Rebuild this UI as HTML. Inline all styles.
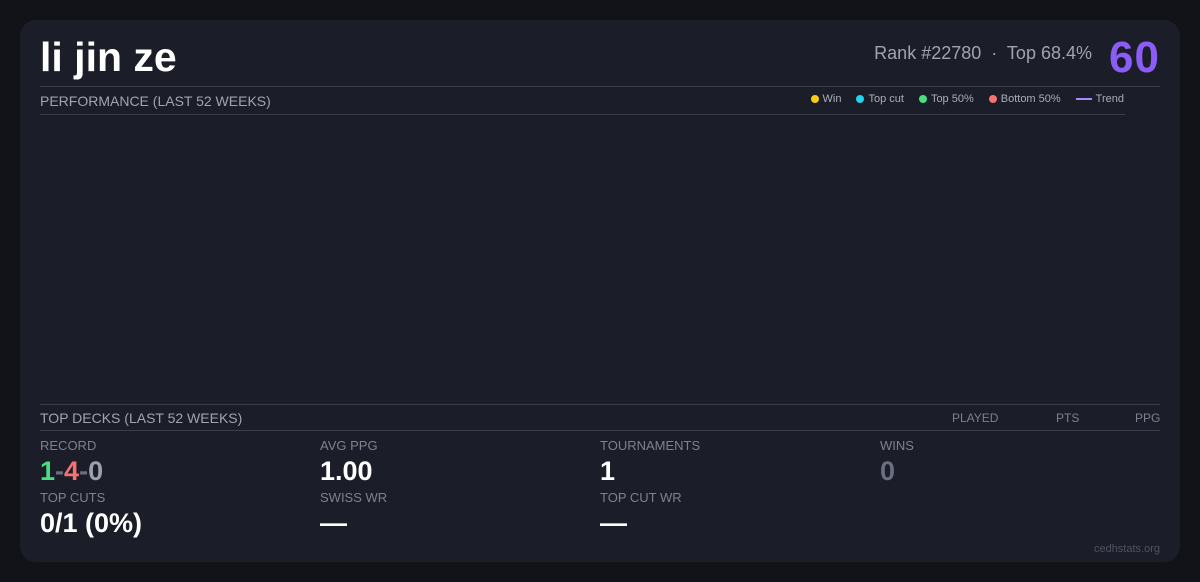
<!DOCTYPE html>
<html><head><style>
*{margin:0;padding:0;box-sizing:border-box}
body{width:1200px;height:582px;background:#121318;font-family:"Liberation Sans",sans-serif;position:relative;overflow:hidden}
.card{position:absolute;left:20px;top:20px;width:1160px;height:542px;background:#1b1d29;border-radius:16px}
.a{position:absolute;white-space:nowrap}
.line{position:absolute;height:1px;background:#3a3e4c}
.lab{font-size:13px;color:#7d8190}
.val{font-size:27px;font-weight:bold;color:#fff}
.leg{font-size:11px;color:#a9adba;display:flex;align-items:center}
.dot{width:8px;height:8px;border-radius:50%;display:inline-block;margin-right:4px;margin-left:15px}
</style></head><body>
<div class="card"></div>
<div class="a" style="left:40px;top:34px;font-size:41px;font-weight:bold;color:#fff">li jin ze</div>
<div class="a" style="right:108px;top:43px;font-size:18px;color:#a0a3b0">Rank #22780 &nbsp;·&nbsp; Top 68.4%</div>
<div class="a" style="right:40px;top:33px;font-size:44px;font-weight:bold;color:#8b5cf6;letter-spacing:1px">60</div>
<div class="line" style="left:40px;top:86px;width:1120px"></div>
<div class="a" style="left:40px;top:93px;font-size:14px;color:#a0a3b0">PERFORMANCE (LAST 52 WEEKS)</div>
<div class="a leg" style="right:76px;top:93px">
<span class="dot" style="background:#facc15"></span>Win
<span class="dot" style="background:#22d3ee"></span>Top cut
<span class="dot" style="background:#4ade80"></span>Top 50%
<span class="dot" style="background:#f87171"></span>Bottom 50%
<span style="display:inline-block;width:16px;height:2px;background:#a78bfa;margin-left:15px;margin-right:4px"></span>Trend
</div>
<div class="line" style="left:40px;top:114px;width:1085px"></div>
<div class="line" style="left:40px;top:404px;width:1120px"></div>
<div class="a" style="left:40px;top:410px;font-size:14px;color:#a0a3b0">TOP DECKS (LAST 52 WEEKS)</div>
<div class="a" style="left:952px;top:411px;font-size:12px;color:#7d8190">PLAYED</div>
<div class="a" style="left:1056px;top:411px;font-size:12px;color:#7d8190">PTS</div>
<div class="a" style="left:1135px;top:411px;font-size:12px;color:#7d8190">PPG</div>
<div class="line" style="left:40px;top:430px;width:1120px"></div>

<div class="a lab" style="left:40px;top:438px">RECORD</div>
<div class="a val" style="left:40px;top:456px"><span style="color:#4ade80">1</span><span style="color:#6b7080">-</span><span style="color:#f87171">4</span><span style="color:#6b7080">-</span><span style="color:#9ca0ad">0</span></div>
<div class="a lab" style="left:40px;top:490px">TOP CUTS</div>
<div class="a val" style="left:40px;top:508px">0/1 (0%)</div>

<div class="a lab" style="left:320px;top:438px">AVG PPG</div>
<div class="a val" style="left:320px;top:456px">1.00</div>
<div class="a lab" style="left:320px;top:490px">SWISS WR</div>
<div class="a val" style="left:320px;top:508px">—</div>

<div class="a lab" style="left:600px;top:438px">TOURNAMENTS</div>
<div class="a val" style="left:600px;top:456px">1</div>
<div class="a lab" style="left:600px;top:490px">TOP CUT WR</div>
<div class="a val" style="left:600px;top:508px">—</div>

<div class="a lab" style="left:880px;top:438px">WINS</div>
<div class="a val" style="left:880px;top:456px;color:#6b7080">0</div>

<div class="a" style="right:40px;top:543px;font-size:11px;color:#4f5362">cedhstats.org</div>
</body></html>
